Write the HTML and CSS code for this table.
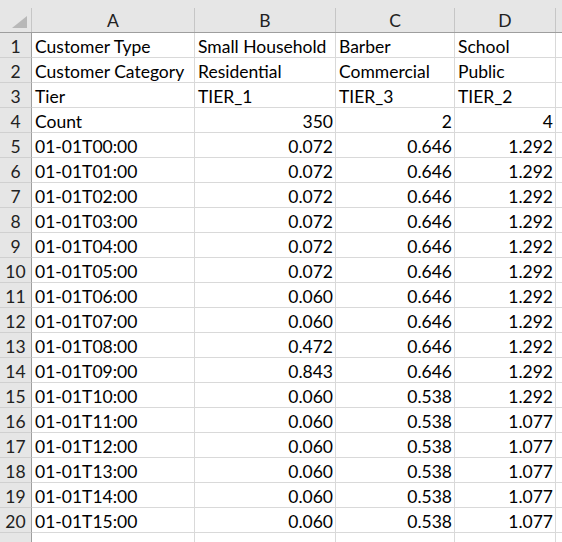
FILE: index.html
```html
<!DOCTYPE html>
<html>
<head>
<meta charset="utf-8">
<link rel="stylesheet" href="styles.css">
</head>
<body>
<div class="sheet">
  <div class="hrow">
    <div class="corner"><span class="tri"></span></div>
    <div class="ch ca">A</div>
    <div class="ch cb">B</div>
    <div class="ch cc">C</div>
    <div class="ch cd">D</div>
    <div class="ch ce"></div>
  </div>
  <div class="row"><div class="rh">1</div><div class="c ca">Customer Type</div><div class="c cb">Small Household</div><div class="c cc">Barber</div><div class="c cd">School</div><div class="c ce"></div></div>
  <div class="row"><div class="rh">2</div><div class="c ca">Customer Category</div><div class="c cb">Residential</div><div class="c cc">Commercial</div><div class="c cd">Public</div><div class="c ce"></div></div>
  <div class="row"><div class="rh">3</div><div class="c ca">Tier</div><div class="c cb">TIER_1</div><div class="c cc">TIER_3</div><div class="c cd">TIER_2</div><div class="c ce"></div></div>
  <div class="row"><div class="rh">4</div><div class="c ca">Count</div><div class="c cb n">350</div><div class="c cc n">2</div><div class="c cd n">4</div><div class="c ce"></div></div>
  <div class="row"><div class="rh">5</div><div class="c ca">01-01T00:00</div><div class="c cb n">0.072</div><div class="c cc n">0.646</div><div class="c cd n">1.292</div><div class="c ce"></div></div>
  <div class="row"><div class="rh">6</div><div class="c ca">01-01T01:00</div><div class="c cb n">0.072</div><div class="c cc n">0.646</div><div class="c cd n">1.292</div><div class="c ce"></div></div>
  <div class="row"><div class="rh">7</div><div class="c ca">01-01T02:00</div><div class="c cb n">0.072</div><div class="c cc n">0.646</div><div class="c cd n">1.292</div><div class="c ce"></div></div>
  <div class="row"><div class="rh">8</div><div class="c ca">01-01T03:00</div><div class="c cb n">0.072</div><div class="c cc n">0.646</div><div class="c cd n">1.292</div><div class="c ce"></div></div>
  <div class="row"><div class="rh">9</div><div class="c ca">01-01T04:00</div><div class="c cb n">0.072</div><div class="c cc n">0.646</div><div class="c cd n">1.292</div><div class="c ce"></div></div>
  <div class="row"><div class="rh">10</div><div class="c ca">01-01T05:00</div><div class="c cb n">0.072</div><div class="c cc n">0.646</div><div class="c cd n">1.292</div><div class="c ce"></div></div>
  <div class="row"><div class="rh">11</div><div class="c ca">01-01T06:00</div><div class="c cb n">0.060</div><div class="c cc n">0.646</div><div class="c cd n">1.292</div><div class="c ce"></div></div>
  <div class="row"><div class="rh">12</div><div class="c ca">01-01T07:00</div><div class="c cb n">0.060</div><div class="c cc n">0.646</div><div class="c cd n">1.292</div><div class="c ce"></div></div>
  <div class="row"><div class="rh">13</div><div class="c ca">01-01T08:00</div><div class="c cb n">0.472</div><div class="c cc n">0.646</div><div class="c cd n">1.292</div><div class="c ce"></div></div>
  <div class="row"><div class="rh">14</div><div class="c ca">01-01T09:00</div><div class="c cb n">0.843</div><div class="c cc n">0.646</div><div class="c cd n">1.292</div><div class="c ce"></div></div>
  <div class="row"><div class="rh">15</div><div class="c ca">01-01T10:00</div><div class="c cb n">0.060</div><div class="c cc n">0.538</div><div class="c cd n">1.292</div><div class="c ce"></div></div>
  <div class="row"><div class="rh">16</div><div class="c ca">01-01T11:00</div><div class="c cb n">0.060</div><div class="c cc n">0.538</div><div class="c cd n">1.077</div><div class="c ce"></div></div>
  <div class="row"><div class="rh">17</div><div class="c ca">01-01T12:00</div><div class="c cb n">0.060</div><div class="c cc n">0.538</div><div class="c cd n">1.077</div><div class="c ce"></div></div>
  <div class="row"><div class="rh">18</div><div class="c ca">01-01T13:00</div><div class="c cb n">0.060</div><div class="c cc n">0.538</div><div class="c cd n">1.077</div><div class="c ce"></div></div>
  <div class="row"><div class="rh">19</div><div class="c ca">01-01T14:00</div><div class="c cb n">0.060</div><div class="c cc n">0.538</div><div class="c cd n">1.077</div><div class="c ce"></div></div>
  <div class="row"><div class="rh">20</div><div class="c ca">01-01T15:00</div><div class="c cb n">0.060</div><div class="c cc n">0.538</div><div class="c cd n">1.077</div><div class="c ce"></div></div>
  <div class="row"><div class="rh"></div><div class="c ca"></div><div class="c cb"></div><div class="c cc"></div><div class="c cd"></div><div class="c ce"></div></div>
</div>
</body>
</html>
```
FILE: styles.css
```css
* { box-sizing: border-box; }
html, body { margin: 0; padding: 0; background: #ffffff; }
body {
  width: 562px;
  height: 542px;
  overflow: hidden;
  font-family: Lato, "Liberation Sans", sans-serif;
  font-size: 17.5px;
  color: #000;
}
.sheet { display: flex; flex-direction: column; }
.hrow {
  display: flex;
  height: 33px;
  padding-top: 8px;
  background: #e6e6e6;
  border-bottom: 1px solid #9e9e9e;
}
.corner {
  width: 32px;
  flex: none;
  border-right: 1px solid #c6c6c6;
  display: flex;
  align-items: flex-end;
  justify-content: flex-end;
  padding: 0 4px 4px 0;
}
.tri {
  width: 15px;
  height: 12px;
  background: #b8b8b8;
  clip-path: polygon(100% 0, 100% 100%, 0 100%);
}
.ch {
  flex: none;
  border-right: 1px solid #c6c6c6;
  text-align: center;
  line-height: 23px;
  padding-top: 1px;
  color: #222;
}
.row { display: flex; height: 25px; }
.rh {
  width: 32px;
  flex: none;
  background: #e6e6e6;
  border-right: 1px solid #9e9e9e;
  border-bottom: 1px solid #d0d0d0;
  text-align: center;
  line-height: 21px;
  padding-top: 3px;
  color: #222;
}
.c {
  flex: none;
  border-right: 1px solid #d9d9d9;
  border-bottom: 1px solid #d9d9d9;
  line-height: 21px;
  padding: 3px 2px 0 3px;
  white-space: nowrap;
  overflow: hidden;
}
.n { text-align: right; }
.ca { width: 163px; }
.cb { width: 141px; }
.cc { width: 119px; }
.cd { width: 101px; }
.ce { width: 6px; border-right: none; padding: 0; }
```
